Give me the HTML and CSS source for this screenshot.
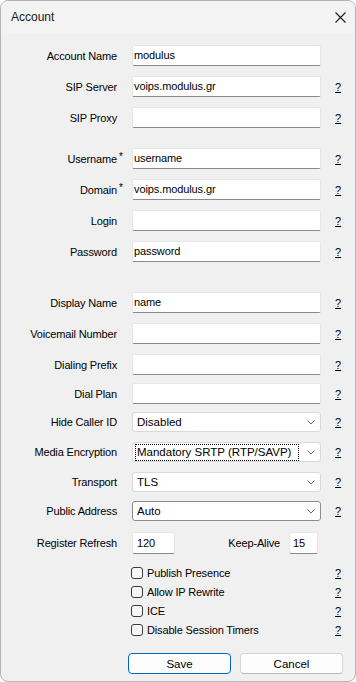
FILE: index.html
```html
<!DOCTYPE html>
<html>
<head>
<meta charset="utf-8">
<link rel="stylesheet" href="styles.css">
</head>
<body>
<div class="window">
  <div class="titlebar">
    <span class="title">Account</span>
    <svg class="close" viewBox="0 0 11 11" width="11" height="11"><path d="M0.5 0.5L10.5 10.5M10.5 0.5L0.5 10.5" stroke="#1c1c1c" stroke-width="1.1" fill="none"/></svg>
  </div>
  <div class="form">
    <div class="row first">
      <span class="lbl">Account Name</span><span class="star"></span>
      <div class="tb">modulus</div><span></span>
    </div>
    <div class="row">
      <span class="lbl">SIP Server</span><span class="star"></span>
      <div class="tb">voips.modulus.gr</div><a class="help">?</a>
    </div>
    <div class="row">
      <span class="lbl">SIP Proxy</span><span class="star"></span>
      <div class="tb"></div><a class="help">?</a>
    </div>

    <div class="row g20">
      <span class="lbl">Username</span><span class="star">*</span>
      <div class="tb">username</div><a class="help">?</a>
    </div>
    <div class="row">
      <span class="lbl">Domain</span><span class="star">*</span>
      <div class="tb">voips.modulus.gr</div><a class="help">?</a>
    </div>
    <div class="row">
      <span class="lbl">Login</span><span class="star"></span>
      <div class="tb"></div><a class="help">?</a>
    </div>
    <div class="row">
      <span class="lbl">Password</span><span class="star"></span>
      <div class="tb">password</div><a class="help">?</a>
    </div>

    <div class="row g30">
      <span class="lbl">Display Name</span><span class="star"></span>
      <div class="tb">name</div><a class="help">?</a>
    </div>
    <div class="row">
      <span class="lbl">Voicemail Number</span><span class="star"></span>
      <div class="tb"></div><a class="help">?</a>
    </div>
    <div class="row">
      <span class="lbl">Dialing Prefix</span><span class="star"></span>
      <div class="tb"></div><a class="help">?</a>
    </div>
    <div class="row g8">
      <span class="lbl">Dial Plan</span><span class="star"></span>
      <div class="tb"></div><a class="help">?</a>
    </div>

    <div class="row sel g8">
      <span class="lbl">Hide Caller ID</span><span class="star"></span>
      <div class="select"><span class="opt">Disabled</span><svg class="chev" viewBox="0 0 8 5" width="8" height="5"><path d="M0.5 0.5L4 4L7.5 0.5" stroke="#6b6b6b" stroke-width="1" fill="none"/></svg></div><a class="help">?</a>
    </div>
    <div class="row sel">
      <span class="lbl">Media Encryption</span><span class="star"></span>
      <div class="select"><span class="opt focus">Mandatory SRTP (RTP/SAVP)</span><svg class="chev" viewBox="0 0 8 5" width="8" height="5"><path d="M0.5 0.5L4 4L7.5 0.5" stroke="#6b6b6b" stroke-width="1" fill="none"/></svg></div><a class="help">?</a>
    </div>
    <div class="row sel">
      <span class="lbl">Transport</span><span class="star"></span>
      <div class="select"><span class="opt">TLS</span><svg class="chev" viewBox="0 0 8 5" width="8" height="5"><path d="M0.5 0.5L4 4L7.5 0.5" stroke="#6b6b6b" stroke-width="1" fill="none"/></svg></div><a class="help">?</a>
    </div>
    <div class="row sel g9">
      <span class="lbl">Public Address</span><span class="star"></span>
      <div class="select hover"><span class="opt">Auto</span><svg class="chev" viewBox="0 0 8 5" width="8" height="5"><path d="M0.5 0.5L4 4L7.5 0.5" stroke="#6b6b6b" stroke-width="1" fill="none"/></svg></div><a class="help">?</a>
    </div>

    <div class="row reg g11">
      <span class="lbl">Register Refresh</span><span class="star"></span>
      <div class="regfield">
        <div class="tb small">120</div>
        <div class="ka"><span class="lbl">Keep-Alive</span><div class="tb tiny">15</div></div>
      </div><span></span>
    </div>

    <div class="row chk g9">
      <span></span><span></span>
      <label class="cb"><span class="box"></span>Publish Presence</label><a class="help">?</a>
    </div>
    <div class="row chk">
      <span></span><span></span>
      <label class="cb"><span class="box"></span>Allow IP Rewrite</label><a class="help">?</a>
    </div>
    <div class="row chk">
      <span></span><span></span>
      <label class="cb"><span class="box"></span>ICE</label><a class="help">?</a>
    </div>
    <div class="row chk">
      <span></span><span></span>
      <label class="cb"><span class="box"></span>Disable Session Timers</label><a class="help">?</a>
    </div>

    <div class="buttons">
      <button class="btn default">Save</button>
      <button class="btn">Cancel</button>
    </div>
  </div>
</div>
</body>
</html>
```

FILE: styles.css
```css
* { box-sizing: border-box; }
html, body { margin: 0; padding: 0; background: #ffffff; }
body {
  font-family: "Liberation Sans", Arial, sans-serif;
  font-size: 11px;
  color: #000;
}
.window {
  width: 356px;
  height: 682px;
  border: 1px solid #b4b4b4;
  border-radius: 8px;
  background: #f0f0f0;
  overflow: hidden;
  display: flex;
  flex-direction: column;
}
.titlebar {
  height: 32px;
  flex: none;
  background: #f3f3f3;
  display: flex;
  align-items: center;
  justify-content: space-between;
  padding: 0 9px 0 10px;
}
.title { font-size: 12px; color: #1a1a1a; }
.close { display: block; }
.form {
  display: flex;
  flex-direction: column;
  padding-top: 12px;
}
.row {
  display: grid;
  grid-template-columns: 116px 15px 189px 1fr;
  align-items: center;
  height: 21px;
  margin-top: 10px;
}
.row.first { margin-top: 0; }
.row.g20 { margin-top: 20px; }
.row.g30 { margin-top: 30px; }
.row.g8 { margin-top: 8px; }
.row.g9 { margin-top: 9px; }
.row.g11 { margin-top: 11px; }
.row.sel { height: 20px; }
.row.reg { height: 22px; }
.row.chk { height: 19px; margin-top: 0; }
.row.chk.g9 { margin-top: 9px; }
.lbl {
  text-align: right;
  white-space: nowrap;
  letter-spacing: -0.15px;
}
.star {
  font-size: 10px;
  align-self: start;
  padding-left: 2px;
  padding-top: 3px;
}
.tb {
  height: 100%;
  background: #fff;
  border: 1px solid #e6e6e6;
  border-bottom-color: #8a8a8a;
  border-radius: 2px;
  padding: 3px 0 0 1px;
  font-size: 11px;
  line-height: 13px;
  letter-spacing: -0.1px;
}
.help {
  padding-left: 14px;
  text-decoration: underline;
  font-size: 11px;
  color: #000;
}
.select {
  height: 100%;
  background: #fff;
  border: 1px solid #d9d9d9;
  border-radius: 3px;
  display: flex;
  align-items: center;
  justify-content: space-between;
  padding: 0 5px 0 2px;
  font-size: 11.5px;
}
.select.hover { border-color: #8c8c8c; }
.opt {
  padding: 0 1px;
  line-height: 15px;
  flex: 1;
  border: 1px solid transparent;
  margin-right: 8px;
}
.opt.focus { border: 1px dotted #000; }
.chev { display: block; flex: none; }
.regfield {
  display: flex;
  justify-content: space-between;
  height: 100%;
  padding-right: 3px;
}
.tb.small { width: 43px; padding-left: 4px; padding-top: 4px; }
.ka { display: flex; align-items: center; gap: 9px; }
.tb.tiny { width: 29px; padding-left: 3px; padding-top: 4px; }
.cb {
  display: flex;
  align-items: center;
  gap: 4px;
  margin-left: -1px;
  font-size: 11px;
  letter-spacing: -0.15px;
}
.box {
  width: 12px;
  height: 12px;
  border: 1px solid #3a3a3a;
  border-radius: 3px;
  background: #f7f7f7;
  flex: none;
}
.buttons {
  display: flex;
  justify-content: flex-end;
  gap: 9px;
  margin-top: 14px;
  padding-right: 12px;
}
.btn {
  width: 103px;
  height: 21px;
  font-family: "Liberation Sans", Arial, sans-serif;
  font-size: 11.5px;
  color: #000;
  background: #fdfdfd;
  border: 1px solid #d4d4d4;
  border-bottom-color: #b8b8b8;
  border-radius: 4px;
  padding: 0;
}
.btn.default { border: 1px solid #0067c0; }
```
